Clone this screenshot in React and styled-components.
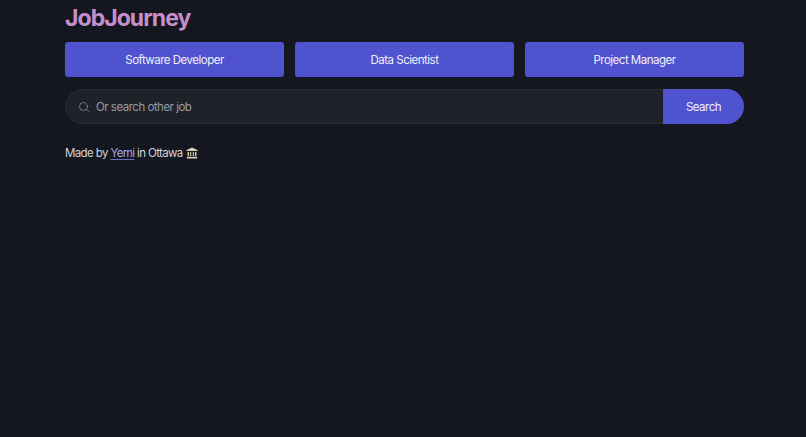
import React from 'react';
import styled, { createGlobalStyle } from 'styled-components';
import { Search } from 'lucide-react';

const GlobalStyle = createGlobalStyle`
    * { box-sizing: border-box; }
    html, body {
        margin: 0;
        min-height: 100%;
        background: #14171f;
    }
    body {
        font-family: Inter, "Liberation Sans", sans-serif;
    }
`;

const Page = styled.main`
    width: 679px;
    margin-left: 65px;
    height: 437px;
    overflow: hidden;
`;

const Title = styled.h1`
    margin: 3px 0 0;
    height: 31px;
    font-size: 23px;
    line-height: 30px;
    font-weight: 700;
    letter-spacing: -0.95px;
    color: #c58fcb;
`;

const Jobs = styled.div`
    display: grid;
    grid-template-columns: repeat(3, 1fr);
    gap: 11px;
    margin-top: 8px;
`;

const JobButton = styled.button`
    height: 35px;
    border: none;
    border-radius: 3px;
    background: #5053cf;
    color: #eef0fb;
    font: 400 11.5px Inter, "Liberation Sans", sans-serif;
    letter-spacing: -0.5px;
`;

const SearchBar = styled.form`
    display: flex;
    height: 35px;
    margin-top: 12px;
    border-radius: 18px;
    overflow: hidden;
    background: #1f2229;
    box-shadow: inset 0 0 0 1px #262a31;
`;

const SearchField = styled.label`
    flex: 1;
    display: flex;
    align-items: center;
    gap: 6px;
    padding-left: 13px;
    color: #9599a1;
`;

const SearchInput = styled.input`
    flex: 1;
    padding: 0;
    border: none;
    outline: none;
    background: transparent;
    color: #e5e7eb;
    font: 400 11.5px Inter, "Liberation Sans", sans-serif;
    letter-spacing: -0.5px;

    &::placeholder {
        color: #989ca4;
        opacity: 1;
    }
`;

const SearchButton = styled.button`
    width: 81px;
    border: none;
    background: #5053cf;
    color: #eef0fb;
    font: 400 11.5px Inter, "Liberation Sans", sans-serif;
    letter-spacing: -0.5px;
`;

const Footer = styled.p`
    display: flex;
    align-items: center;
    margin: 21px 0 0;
    height: 16px;
    font-size: 11.5px;
    line-height: 16px;
    letter-spacing: -0.62px;
    color: #d1d3d8;
    white-space: pre;
`;

const AuthorLink = styled.a`
    color: #a5a6ea;
    text-decoration: underline;
    text-underline-offset: 2px;
    text-decoration-color: #6a6cc0;
`;

const MuseumIcon = styled.svg`
    width: 12px;
    height: 12px;
    margin-left: 1px;
`;

function Museum() {
    return (
        <MuseumIcon viewBox="0 0 12 12" aria-hidden="true">
            <path d="M6 .5 11.5 3v1H.5V3z" fill="#d8d0b0" />
            <path d="M1.5 5h1.6v4.5H1.5zM4 5h1.2v4.5H4zM6.8 5H8v4.5H6.8zM8.9 5h1.6v4.5H8.9z" fill="#c9bf98" />
            <path d="M.8 10h10.4v1.5H.8z" fill="#d8d0b0" />
        </MuseumIcon>
    );
}

function App() {
    return (
        <>
            <GlobalStyle />
            <Page>
                <Title>JobJourney</Title>
                <Jobs>
                    <JobButton>Software Developer</JobButton>
                    <JobButton>Data Scientist</JobButton>
                    <JobButton>Project Manager</JobButton>
                </Jobs>
                <SearchBar onSubmit={(e) => e.preventDefault()}>
                    <SearchField>
                        <Search size={12} strokeWidth={1.4} />
                        <SearchInput placeholder="Or search other job" />
                    </SearchField>
                    <SearchButton>Search</SearchButton>
                </SearchBar>
                <Footer>
                    Made by <AuthorLink href="#">Yemi</AuthorLink> in Ottawa <Museum />
                </Footer>
            </Page>
        </>
    );
}

export default App;
